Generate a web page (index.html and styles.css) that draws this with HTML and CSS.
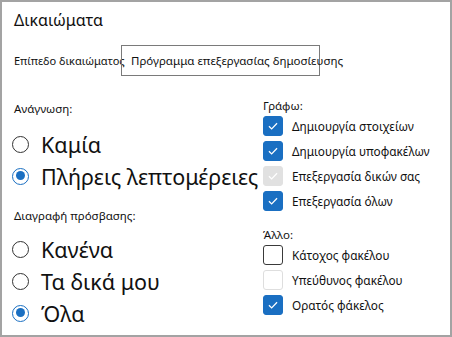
FILE: index.html
```html
<!DOCTYPE html>
<html lang="el">
<head>
    <meta charset="UTF-8">
    <title>Δικαιώματα</title>
    <link rel="stylesheet" href="styles.css">
</head>
<body>
    <div class="panel">
        <div class="panel-title">Δικαιώματα</div>

        <div class="level-row">
            <span class="level-label">Επίπεδο δικαιώματος</span>
            <div class="level-box">Πρόγραμμα επεξεργασίας δημοσίευσης</div>
        </div>

        <div class="columns">
            <div class="col-left">
                <div class="group-label read-label">Ανάγνωση:</div>
                <div class="radio-row">
                    <span class="radio"></span>
                    <span class="radio-text">Καμία</span>
                </div>
                <div class="radio-row">
                    <span class="radio checked"></span>
                    <span class="radio-text">Πλήρεις λεπτομέρειες</span>
                </div>

                <div class="group-label delete-label">Διαγραφή πρόσβασης:</div>
                <div class="radio-row radio-first">
                    <span class="radio"></span>
                    <span class="radio-text">Κανένα</span>
                </div>
                <div class="radio-row">
                    <span class="radio"></span>
                    <span class="radio-text">Τα δικά μου</span>
                </div>
                <div class="radio-row">
                    <span class="radio checked"></span>
                    <span class="radio-text">Όλα</span>
                </div>
            </div>

            <div class="col-right">
                <div class="group-label write-label">Γράφω:</div>
                <div class="check-list">
                    <div class="check-row">
                        <span class="check on"><svg viewBox="0 0 20 20"><path d="M5.5 10.2l3 3 6-6.2"/></svg></span>
                        <span class="check-text">Δημιουργία στοιχείων</span>
                    </div>
                    <div class="check-row">
                        <span class="check on"><svg viewBox="0 0 20 20"><path d="M5.5 10.2l3 3 6-6.2"/></svg></span>
                        <span class="check-text">Δημιουργία υποφακέλων</span>
                    </div>
                    <div class="check-row">
                        <span class="check disabled"><svg viewBox="0 0 20 20"><path d="M5.5 10.2l3 3 6-6.2"/></svg></span>
                        <span class="check-text">Επεξεργασία δικών σας</span>
                    </div>
                    <div class="check-row">
                        <span class="check on"><svg viewBox="0 0 20 20"><path d="M5.5 10.2l3 3 6-6.2"/></svg></span>
                        <span class="check-text">Επεξεργασία όλων</span>
                    </div>
                </div>

                <div class="group-label other-label">Άλλο:</div>
                <div class="check-list">
                    <div class="check-row">
                        <span class="check"></span>
                        <span class="check-text">Κάτοχος φακέλου</span>
                    </div>
                    <div class="check-row">
                        <span class="check faint"></span>
                        <span class="check-text">Υπεύθυνος φακέλου</span>
                    </div>
                    <div class="check-row">
                        <span class="check on"><svg viewBox="0 0 20 20"><path d="M5.5 10.2l3 3 6-6.2"/></svg></span>
                        <span class="check-text">Ορατός φάκελος</span>
                    </div>
                </div>
            </div>
        </div>
    </div>
</body>
</html>
```

FILE: styles.css
```css
/* Πάνελ δικαιωμάτων */
body {
    margin: 0;
    padding: 0;
    background-color: white;
}
.panel {
    width: 452px;
    height: 337px;
    box-sizing: border-box;
    border: 2px solid #a3a3a3;
    padding: 8px 0 0 12px;
    overflow: hidden;
    font-family: "Noto Sans", "DejaVu Sans", sans-serif;
    color: #111;
}
.panel-title {
    font-size: 16px;
    line-height: 20px;
}
.level-row {
    display: flex;
    align-items: center;
    margin-top: 15px;
}
.level-label {
    width: 107px;
    flex: none;
    font-size: 11px;
    white-space: nowrap;
}
.level-box {
    width: 199px;
    height: 31px;
    box-sizing: border-box;
    border: 1px solid #7a7a7a;
    padding-left: 9px;
    font-size: 11.5px;
    line-height: 29px;
    white-space: nowrap;
}
.columns {
    display: flex;
    margin-top: 21px;
}
.col-left {
    width: 249px;
    flex: none;
}
.col-right {
    flex: 1;
}
.group-label {
    font-size: 11.5px;
    line-height: 16px;
}
.read-label {
    margin-top: 4px;
}
.delete-label {
    margin-top: 16px;
}
.write-label {
    margin-top: 1px;
}
.other-label {
    margin-top: 16px;
}
.radio-row {
    display: flex;
    align-items: center;
    height: 32px;
    white-space: nowrap;
}
.read-label + .radio-row {
    margin-top: 11px;
}
.radio-first {
    margin-top: 9px;
}
.radio {
    width: 17px;
    height: 17px;
    margin-left: -2px;
    box-sizing: border-box;
    border: 1px solid #333;
    border-radius: 50%;
    flex: none;
    position: relative;
}
.radio.checked {
    border: 1.5px solid #1a6fc2;
}
.radio.checked::after {
    content: "";
    position: absolute;
    left: 2.5px;
    top: 2.5px;
    width: 9px;
    height: 9px;
    border-radius: 50%;
    background-color: #1a6fc2;
}
.radio-text {
    margin-left: 12px;
    font-size: 21.5px;
}
.check-list {
    display: flex;
    flex-direction: column;
    gap: 5px;
    margin-top: 2px;
}
.check-row {
    display: flex;
    align-items: center;
    height: 20px;
    white-space: nowrap;
}
.check {
    width: 20px;
    height: 20px;
    box-sizing: border-box;
    border: 1px solid #3a3a3a;
    border-radius: 3px;
    flex: none;
    background-color: white;
}
.check svg {
    display: block;
    width: 18px;
    height: 18px;
    fill: none;
    stroke: white;
    stroke-width: 1.4;
}
.check.on {
    background-color: #1a6fc2;
    border-color: #1a6fc2;
}
.check.disabled {
    background-color: #e1e1e1;
    border-color: #e1e1e1;
}
.check.faint {
    border-color: #dedede;
}
.check-text {
    margin-left: 9px;
    font-size: 11.8px;
}
```
